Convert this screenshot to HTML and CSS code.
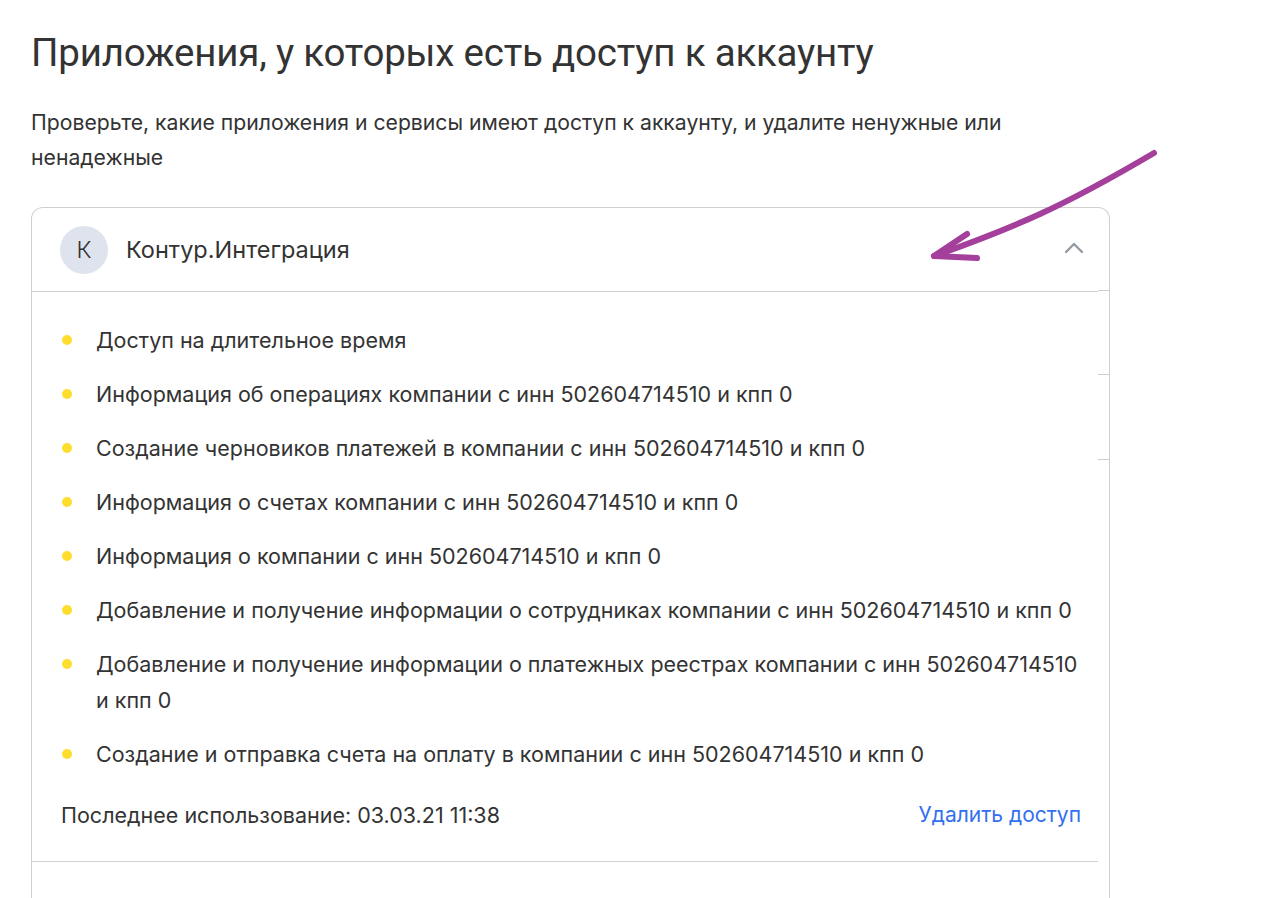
FILE: index.html
```html
<!DOCTYPE html>
<html lang="ru">
<head>
<meta charset="utf-8">
<title>Приложения, у которых есть доступ к аккаунту</title>
<link rel="stylesheet" href="styles.css">
</head>
<body>
<main class="page">
  <h1 class="title">Приложения, у которых есть доступ к аккаунту</h1>
  <p class="lead">Проверьте, какие приложения и сервисы имеют доступ к аккаунту, и удалите ненужные или ненадежные</p>

  <section class="card">
    <div class="card-main">
      <header class="card-head">
        <div class="avatar">К</div>
        <div class="app-name">Контур.Интеграция</div>
        <svg class="chevron" width="20" height="12" viewBox="0 0 20 12"><path d="M2 10 L10 2 L18 10" fill="none" stroke="#9299a2" stroke-width="2.4" stroke-linecap="round" stroke-linejoin="round"/></svg>
      </header>
      <ul class="perms">
        <li>Доступ на длительное время</li>
        <li>Информация об операциях компании с инн 502604714510 и кпп 0</li>
        <li>Создание черновиков платежей в компании с инн 502604714510 и кпп 0</li>
        <li>Информация о счетах компании с инн 502604714510 и кпп 0</li>
        <li>Информация о компании с инн 502604714510 и кпп 0</li>
        <li>Добавление и получение информации о сотрудниках компании с инн 502604714510 и кпп 0</li>
        <li>Добавление и получение информации о платежных реестрах компании с инн 502604714510 и кпп 0</li>
        <li>Создание и отправка счета на оплату в компании с инн 502604714510 и кпп 0</li>
      </ul>
      <footer class="card-foot">
        <span class="last-used">Последнее использование: 03.03.21 11:38</span>
        <a class="revoke" href="#">Удалить доступ</a>
      </footer>
    </div>
    <div class="card-edge">
      <div class="stub stub-1"></div>
      <div class="stub stub-2"></div>
      <div class="stub stub-3"></div>
    </div>
  </section>
</main>
<svg class="arrow" width="1262" height="898" viewBox="0 0 1262 898">
  <g fill="none" stroke="#a4409c" stroke-width="6" stroke-linecap="round" stroke-linejoin="round">
    <path d="M1154 153 C1115 176 1075 198 1040 214 C1003 231 968 244 934 256"/>
    <path d="M967 234 L934 256 L977 258"/>
  </g>
</svg>
</body>
</html>
```
FILE: styles.css
```css
* { box-sizing: border-box; }
html, body { margin: 0; padding: 0; background: #fff; }
body {
  font-family: Inter, "Noto Sans", "Liberation Sans", sans-serif;
  color: #333333;
  position: relative;
  height: 898px;
  overflow: hidden;
}
.page {
  padding: 27px 0 0 31px;
}
.title {
  margin: 0;
  font-family: Roboto, "Noto Sans", sans-serif;
  font-size: 38.5px;
  font-weight: 400;
  line-height: 52px;
  color: #333;
  letter-spacing: -0.2px;
}
.lead {
  margin: 26px 0 0;
  width: 1000px;
  font-size: 21.2px;
  line-height: 35px;
  color: #333;
}
.card {
  margin-top: 32px;
  width: 1079px;
  border: 1px solid #cfcfcf;
  border-bottom: none;
  border-radius: 12px 12px 0 0;
  display: flex;
  height: 720px;
}
.card-main {
  width: 1066px;
  display: flex;
  flex-direction: column;
}
.card-edge {
  flex: 1;
  display: flex;
  flex-direction: column;
}
.stub { border-bottom: 1px solid #cfcfcf; }
.stub-1 { height: 83px; }
.stub-2 { height: 84px; }
.stub-3 { height: 85px; }
.card-head {
  height: 84px;
  border-bottom: 1px solid #cfcfcf;
  display: flex;
  align-items: center;
  padding: 0 14px 0 28px;
}
.avatar {
  width: 48px;
  height: 48px;
  border-radius: 50%;
  background: #dee3ee;
  display: flex;
  align-items: center;
  justify-content: center;
  font-size: 23px;
  font-weight: 300;
  color: #333;
}
.app-name {
  margin-left: 18px;
  font-size: 23.5px;
  flex: 1;
}
.chevron { display: block; margin-top: -4px; }
.perms {
  list-style: none;
  margin: 0;
  padding: 30px 14px 0 29px;
}
.perms li {
  position: relative;
  padding-left: 35px;
  font-size: 21.5px;
  line-height: 36px;
  margin-bottom: 18px;
}
.perms li::before {
  content: "";
  position: absolute;
  left: 1px;
  top: 13px;
  width: 10px;
  height: 10px;
  border-radius: 50%;
  background: #ffdd2d;
}
.card-foot {
  display: flex;
  justify-content: space-between;
  align-items: center;
  padding: 13px 17px 34px 29px;
  border-bottom: 1px solid #cfcfcf;
  font-size: 21.5px;
  line-height: 24px;
}
.revoke {
  color: #336fee;
  text-decoration: none;
  font-size: 21px;
}
.arrow {
  position: absolute;
  left: 0;
  top: 0;
  pointer-events: none;
}
```
